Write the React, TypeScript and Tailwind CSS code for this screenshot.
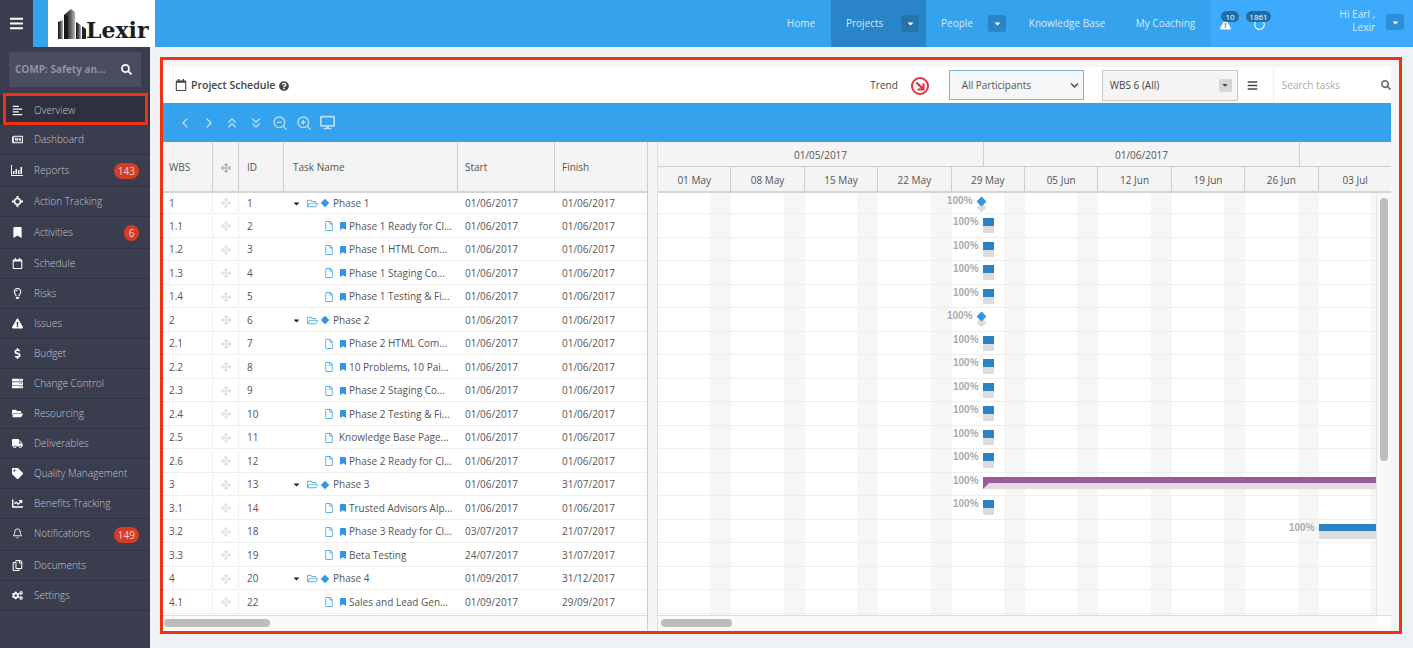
import React from "react";
import {
  FaAlignLeft,
  FaArrowsAlt,
  FaBars,
  FaBookmark,
  FaCaretDown,
  FaChartLine,
  FaChevronDown,
  FaCogs,
  FaDesktop,
  FaDollarSign,
  FaExclamationTriangle,
  FaFolderOpen,
  FaQuestionCircle,
  FaRegCalendar,
  FaRegCircle,
  FaRegCopy,
  FaRegFile,
  FaRegFolderOpen,
  FaRegLightbulb,
  FaRegNewspaper,
  FaSearch,
  FaServer,
  FaTag,
  FaTruck,
} from "react-icons/fa";
import { FiBell, FiChevronLeft, FiChevronRight, FiChevronsDown, FiChevronsUp, FiZoomIn, FiZoomOut } from "react-icons/fi";

function ChartIcon({ className }: { className?: string }) {
  return (
    <svg viewBox="0 0 12 11" width="12" height="11" className={className} fill="currentColor">
      <path d="M0 0h1v10h11v1H0z" />
      <path d="M2 6h1.5v3H2zM4.5 4H6v5H4.5zM7 5h1.5v4H7zM9.500 2H11v7H9.500z" />
    </svg>
  );
}

function TargetIcon({ className }: { className?: string }) {
  return (
    <svg viewBox="0 0 12 12" width="11" height="11" className={className} fill="none" stroke="currentColor">
      <circle cx="6" cy="6" r="3.2" strokeWidth="1.6" />
      <path d="M6 0v2.500M6 9.500V12M0 6h2.500M9.500 6H12" strokeWidth="2" />
    </svg>
  );
}

const menu = [
  { label: "Overview", icon: FaAlignLeft, h: "h-[30px] pt-[1px]", active: true },
  { label: "Dashboard", icon: FaRegNewspaper, h: "h-[30px]" },
  { label: "Reports", icon: ChartIcon, h: "h-[32px]", badge: "143" },
  { label: "Action Tracking", icon: TargetIcon, h: "h-[30px]" },
  { label: "Activities", icon: FaBookmark, h: "h-[32px] pb-[1px]", badge: "6" },
  { label: "Schedule", icon: FaRegCalendar, h: "h-[30px]" },
  { label: "Risks", icon: FaRegLightbulb, h: "h-[30px]" },
  { label: "Issues", icon: FaExclamationTriangle, h: "h-[30px]" },
  { label: "Budget", icon: FaDollarSign, h: "h-[30px]" },
  { label: "Change Control", icon: FaServer, h: "h-[30px]" },
  { label: "Resourcing", icon: FaFolderOpen, h: "h-[30px]" },
  { label: "Deliverables", icon: FaTruck, h: "h-[30px]" },
  { label: "Quality Management", icon: FaTag, h: "h-[30px]" },
  { label: "Benefits Tracking", icon: FaChartLine, h: "h-[30px] pb-[1px]" },
  { label: "Notifications", icon: FiBell, h: "h-[32px] pb-[3px]", badge: "149" },
  { label: "Documents", icon: FaRegCopy, h: "h-[30px] pb-[1px]" },
  { label: "Settings", icon: FaCogs, h: "h-[30px] pb-[1px]" },
];

type Row = {
  wbs: string;
  id: string;
  name: string;
  start: string;
  finish: string;
  kind: "phase" | "task" | "plain";
  bar?: "diamond" | "small" | "purple" | "long";
};

const rows: Row[] = [
  { wbs: "1", id: "1", name: "Phase 1", start: "01/06/2017", finish: "01/06/2017", kind: "phase", bar: "diamond" },
  { wbs: "1.1", id: "2", name: "Phase 1 Ready for Cl...", start: "01/06/2017", finish: "01/06/2017", kind: "task", bar: "small" },
  { wbs: "1.2", id: "3", name: "Phase 1 HTML Com...", start: "01/06/2017", finish: "01/06/2017", kind: "task", bar: "small" },
  { wbs: "1.3", id: "4", name: "Phase 1 Staging Co...", start: "01/06/2017", finish: "01/06/2017", kind: "task", bar: "small" },
  { wbs: "1.4", id: "5", name: "Phase 1 Testing & Fi...", start: "01/06/2017", finish: "01/06/2017", kind: "task", bar: "small" },
  { wbs: "2", id: "6", name: "Phase 2", start: "01/06/2017", finish: "01/06/2017", kind: "phase", bar: "diamond" },
  { wbs: "2.1", id: "7", name: "Phase 2 HTML Com...", start: "01/06/2017", finish: "01/06/2017", kind: "task", bar: "small" },
  { wbs: "2.2", id: "8", name: "10 Problems, 10 Pai...", start: "01/06/2017", finish: "01/06/2017", kind: "task", bar: "small" },
  { wbs: "2.3", id: "9", name: "Phase 2 Staging Co...", start: "01/06/2017", finish: "01/06/2017", kind: "task", bar: "small" },
  { wbs: "2.4", id: "10", name: "Phase 2 Testing & Fi...", start: "01/06/2017", finish: "01/06/2017", kind: "task", bar: "small" },
  { wbs: "2.5", id: "11", name: "Knowledge Base Page...", start: "01/06/2017", finish: "01/06/2017", kind: "plain", bar: "small" },
  { wbs: "2.6", id: "12", name: "Phase 2 Ready for Cl...", start: "01/06/2017", finish: "01/06/2017", kind: "task", bar: "small" },
  { wbs: "3", id: "13", name: "Phase 3", start: "01/06/2017", finish: "31/07/2017", kind: "phase", bar: "purple" },
  { wbs: "3.1", id: "14", name: "Trusted Advisors Alp...", start: "01/06/2017", finish: "01/06/2017", kind: "task", bar: "small" },
  { wbs: "3.2", id: "18", name: "Phase 3 Ready for Cl...", start: "03/07/2017", finish: "21/07/2017", kind: "task", bar: "long" },
  { wbs: "3.3", id: "19", name: "Beta Testing", start: "24/07/2017", finish: "31/07/2017", kind: "task" },
  { wbs: "4", id: "20", name: "Phase 4", start: "01/09/2017", finish: "31/12/2017", kind: "phase" },
  { wbs: "4.1", id: "22", name: "Sales and Lead Gen...", start: "01/09/2017", finish: "29/09/2017", kind: "task" },
];

const weeks = ["01 May", "08 May", "15 May", "22 May", "29 May", "05 Jun", "12 Jun", "19 Jun", "26 Jun", "03 Jul"];

function Caret() {
  return (
    <span className="flex h-[17px] w-[18px] items-center justify-center rounded-[3px] bg-[#2475ae] text-white">
      <FaCaretDown className="text-[9px]" />
    </span>
  );
}

function Sidebar() {
  return (
    <aside className="w-[150px] shrink-0 bg-[#3a3d4e] text-[10px] text-[#c3c5cc]">
      <div className="px-[9px] pt-[5px] pb-[8px]">
        <div className="flex h-[35px] items-center justify-between bg-[#4a4c5f] pr-[9px] pl-[6px]">
          <span className="font-bold text-[#90929f]">COMP: Safety an...</span>
          <FaSearch className="text-[11px] text-white" />
        </div>
      </div>
      {menu.map((m) => {
        const Icon = m.icon;
        return (
          <div
            key={m.label}
            className={`relative flex items-center border-b border-[#2e313f] ${m.h} ${m.active ? "bg-[#2e3040]" : ""}`}
          >
            <span className="flex w-[34px] shrink-0 justify-center text-white">
              <Icon className="text-[11px]" />
            </span>
            <span className="font-light">{m.label}</span>
            {m.badge && (
              <span className="absolute top-[8px] right-[11px] flex h-[16px] min-w-[15px] items-center justify-center rounded-full bg-[#d63b27] px-[4px] text-[#f5d5cf]">
                {m.badge}
              </span>
            )}
            {m.active && <span className="absolute -top-[2px] right-[2px] -bottom-[1px] left-[3px] border-[3px] border-[#ee3311]" />}
          </div>
        );
      })}
    </aside>
  );
}

function TopBar() {
  return (
    <header className="flex h-[47px] shrink-0 bg-[#35a2ee] text-[10px] text-[#d5ecfb]">
      <div className="flex w-[33px] items-center justify-center bg-[#3a3d4e] text-white">
        <FaBars className="text-[15px]" />
      </div>
      <div className="w-[15px]" />
      <div className="flex w-[107px] items-end bg-white pb-[8px] pl-[10px]">
        <svg width="28" height="30" viewBox="0 0 28 30" className="shrink-0">
          <defs>
            <linearGradient id="tower" x1="0" y1="0" x2="1" y2="0">
              <stop offset="0" stopColor="#111" />
              <stop offset="0.55" stopColor="#555" />
              <stop offset="1" stopColor="#bbb" />
            </linearGradient>
          </defs>
          <path d="M0 30V13l5-2v19z" fill="url(#tower)" />
          <path d="M6 30V6l7-6 4 3v27z" fill="url(#tower)" />
          <path d="M7 30V7h3v23z" fill="#1a1a1a" />
          <path d="M18 30V13l5 3v14z" fill="url(#tower)" />
          <path d="M24 30V17l4 3v10z" fill="#222" />
        </svg>
        <span className="font-['DejaVu_Serif',serif] text-[22px] leading-[18px] font-bold text-[#1c1c1c]">Lexir</span>
      </div>
      <div className="flex-1" />
      <nav className="flex items-center">
        <div className="flex h-full w-[60px] items-center justify-center">Home</div>
        <div className="flex h-full w-[95px] items-center justify-between bg-[#2a85c8] pr-[7px] pl-[15px]">
          Projects
          <Caret />
        </div>
        <div className="flex h-full w-[88px] items-center justify-between pr-[8px] pl-[15px]">
          People
          <span className="flex h-[17px] w-[18px] items-center justify-center rounded-[3px] bg-[#2a85c8] text-white">
            <FaCaretDown className="text-[9px]" />
          </span>
        </div>
        <div className="flex h-full w-[106px] items-center justify-center">Knowledge Base</div>
        <div className="flex h-full w-[91px] items-center justify-center">My Coaching</div>
      </nav>
      <div className="relative flex w-[202px] items-center bg-[#3eaafc]">
        <div className="flex items-center gap-[23px] pt-[2px] pl-[9px]">
          <FaExclamationTriangle className="text-[11px] text-white" />
          <FaRegCircle className="text-[11px] text-white" />
        </div>
        <span className="absolute top-[11px] left-[10px] flex h-[11px] w-[18px] items-center justify-center rounded-full bg-[#1f6ea6] text-[8px] text-white">10</span>
        <span className="absolute top-[11px] left-[35px] flex h-[11px] w-[25px] items-center justify-center rounded-full bg-[#1f6ea6] text-[8px] text-white">1861</span>
        <div className="absolute top-[8px] right-[38px] text-right leading-[13px]">
          Hi Earl ,
          <br />
          Lexir
        </div>
        <span className="absolute top-[14px] right-[9px] flex h-[16px] w-[18px] items-center justify-center rounded-[3px] bg-[#2e8fd8] text-white">
          <FaCaretDown className="text-[9px]" />
        </span>
      </div>
    </header>
  );
}

function Filters() {
  return (
    <div className="flex h-[36px] shrink-0 items-center bg-white text-[10px] text-[#444]">
      <FaRegCalendar className="ml-[12px] text-[12px] text-[#444]" />
      <span className="mt-[2px] ml-[4px] text-[10.5px] font-semibold">Project Schedule</span>
      <FaQuestionCircle className="mt-[1px] ml-[4px] text-[10px] text-[#444]" />
      <span className="ml-[581px]">Trend</span>
      <span className="mt-[2px] ml-[13px] flex h-[18px] w-[18px] items-center justify-center rounded-full border-2 border-[#d9363e] text-[#d9363e]">
        <svg viewBox="0 0 10 10" width="10" height="10" fill="none" stroke="currentColor" strokeWidth="2.200">
          <path d="M1.500 1.500l6 6M8.500 2.500v6h-6" />
        </svg>
      </span>
      <div className="ml-[20px] flex h-[30px] w-[135px] items-center justify-between border border-[#7db4e0] bg-[#f4f6f8] pr-[4px] pl-[12px] text-[#555]">
        All Participants
        <FaChevronDown className="text-[9px] text-[#444]" />
      </div>
      <div className="ml-[18px] flex h-[31px] w-[136px] items-center justify-between border-[1.5px] border-[#c8c8c8] bg-[#f5f5f5] pr-[5px] pl-[7px]">
        WBS 6 (All)
        <span className="flex h-[13px] w-[13px] items-center justify-center rounded-[2px] bg-[#d5d5d5]">
          <FaCaretDown className="text-[8px]" />
        </span>
      </div>
      <FaBars className="ml-[9px] text-[11px] text-[#444]" />
      <div className="ml-[15px] flex h-full flex-1 items-center justify-between border-l border-[#eee] pl-[8px] text-[#aaa]">
        Search tasks
        <FaSearch className="text-[10px] text-[#666]" />
      </div>
    </div>
  );
}

function Toolbar() {
  const slot = "flex w-[16px] justify-center text-[#b5e0fa]";
  return (
    <div className="flex h-[39px] shrink-0 items-center gap-[7.500px] bg-[#35a2ee] pl-[14px] text-[18px]">
      <span className={slot}>
        <FiChevronLeft />
      </span>
      <span className={slot}>
        <FiChevronRight />
      </span>
      <span className={slot}>
        <FiChevronsUp />
      </span>
      <span className={slot}>
        <FiChevronsDown />
      </span>
      <span className={`${slot} ml-[1px] text-[16px]`}>
        <FiZoomOut />
      </span>
      <span className={`${slot} text-[16px]`}>
        <FiZoomIn />
      </span>
      <span className={`${slot} text-[15px]`}>
        <FaDesktop />
      </span>
    </div>
  );
}

function TaskName({ row }: { row: Row }) {
  if (row.kind === "phase") {
    return (
      <div className="flex items-center pl-[8px]">
        <FaCaretDown className="text-[9px] text-[#222]" />
        <FaRegFolderOpen className="ml-[6px] text-[11px] text-[#5ab4e8]" />
        <span className="mr-[3px] ml-[4px] size-[6px] rotate-45 bg-[#2f96e6]" />
        <span className="ml-[2px]">{row.name}</span>
      </div>
    );
  }
  return (
    <div className="flex items-center pl-[40px]">
      <FaRegFile className="text-[10px] text-[#5ab4e8]" />
      {row.kind === "task" && <FaBookmark className="ml-[5px] text-[8px] text-[#2f96e6]" />}
      <span className={row.kind === "task" ? "ml-[2px]" : "ml-[5px]"}>{row.name}</span>
    </div>
  );
}

function TaskTable() {
  return (
    <div className="flex h-full w-[485px] shrink-0 flex-col border-r border-[#ccc]">
      <div className="grid h-[51px] shrink-0 grid-cols-[50px_26px_45px_174px_97px_93px] border-b-2 border-[#d5d5d5] bg-[#f4f4f4] text-[#555]">
        <div className="flex items-center border-r border-[#ccc] pt-[2px] pl-[6px]">WBS</div>
        <div className="flex items-center justify-center border-r border-[#ccc] pt-[2px] text-[#aaa]">
          <FaArrowsAlt className="text-[10px]" />
        </div>
        <div className="flex items-center border-r border-[#ccc] pt-[2px] pl-[8px]">ID</div>
        <div className="flex items-center border-r border-[#ccc] pt-[2px] pl-[9px]">Task Name</div>
        <div className="flex items-center border-r border-[#ccc] pt-[2px] pl-[7px]">Start</div>
        <div className="flex items-center pt-[2px] pl-[7px]">Finish</div>
      </div>
      <div className="flex-1 overflow-hidden">
        {rows.map((r, i) => (
          <div
            key={r.id}
            className={`grid grid-cols-[50px_26px_45px_174px_97px_93px] items-center border-b border-[#eee] text-[#555] ${i === 0 ? "h-[21px]" : "h-[23.5px] pt-[1.5px]"}`}
          >
            <div className="flex h-full items-center border-r border-[#eee] pl-[6px]">{r.wbs}</div>
            <div className="flex h-full items-center justify-center border-r border-[#eee] text-[#ddd]">
              <FaArrowsAlt className="text-[10px]" />
            </div>
            <div className="pl-[8px]">{r.id}</div>
            <TaskName row={r} />
            <div className="pl-[7px]">{r.start}</div>
            <div className="pl-[7px]">{r.finish}</div>
          </div>
        ))}
      </div>
      <div className="h-[16px] shrink-0 border-t border-[#ddd] bg-[#fafafa] pt-[3px] pl-[1px]">
        <div className="h-[8px] w-[106px] rounded-full bg-[#bdbdbd]" />
      </div>
    </div>
  );
}

function GanttBar({ bar }: { bar: NonNullable<Row["bar"]> }) {
  const pct = "absolute top-[1px] text-right text-[10px] leading-[14px] font-bold text-[#aaa] font-['Liberation_Sans',sans-serif]";
  if (bar === "diamond") {
    return (
      <>
        <span className={`${pct} left-[289px]`}>100%</span>
        <span className="absolute top-[11px] left-[319.500px] size-[7px] rotate-45 bg-[#ddd]" />
        <span className="absolute top-[5px] left-[319.500px] size-[7px] rotate-45 bg-[#2f96e6]" />
      </>
    );
  }
  if (bar === "small") {
    return (
      <>
        <span className={`${pct} left-[295px]`}>100%</span>
        <span className="absolute top-[4px] left-[325px] h-[8px] w-[11px] bg-[#2b83c6]" />
        <span className="absolute top-[12px] left-[325px] h-[7px] w-[11px] bg-[#dcdcdc]" />
      </>
    );
  }
  if (bar === "purple") {
    return (
      <>
        <span className={`${pct} left-[295px]`}>100%</span>
        <span className="absolute top-[4px] right-0 left-[325px] h-[6px] bg-[#985a98]" />
        <span className="absolute top-[10px] right-0 left-[325px] h-[6px] bg-[#e0dce0]" />
        <span className="absolute top-[10px] left-[325px] size-0 border-t-[6px] border-r-[6px] border-t-[#985a98] border-r-transparent" />
      </>
    );
  }
  return (
    <>
      <span className={`${pct} left-[631px]`}>100%</span>
      <span className="absolute top-[4px] right-0 left-[661px] h-[7px] bg-[#2b83c6]" />
      <span className="absolute top-[11px] right-0 left-[661px] h-[8px] bg-[#dcdcdc]" />
    </>
  );
}

function Gantt() {
  return (
    <div className="flex h-full min-w-0 flex-1 flex-col">
      <div className="h-[51px] shrink-0 border-b-2 border-[#d5d5d5] bg-[#f4f4f4] text-[#555]">
        <div className="flex h-[25px] border-b border-[#ccc]">
          <div className="flex w-[326px] items-center justify-center border-r border-[#ccc] pt-[2px]">01/05/2017</div>
          <div className="flex w-[316px] items-center justify-center border-r border-[#ccc] pt-[2px]">01/06/2017</div>
        </div>
        <div className="flex h-[24px]">
          {weeks.map((w) => (
            <div key={w} className="flex w-[73.4px] shrink-0 items-center justify-center border-r border-[#ccc] pt-[2px] last:border-r-0">
              {w}
            </div>
          ))}
        </div>
      </div>
      <div className="flex min-h-0 flex-1">
        <div className="relative min-w-0 flex-1 overflow-hidden border-r border-[#e5e5e5]">
          <div className="absolute inset-0 flex">
            {weeks.map((w) => (
              <div key={w} className="flex w-[73.4px] shrink-0 justify-end">
                <div className="h-full w-[21px] bg-[#f6f6f6]" />
              </div>
            ))}
          </div>
          {rows.map((r, i) => (
            <div key={r.id} className={`relative border-b border-[#eee] ${i === 0 ? "h-[21px]" : "h-[23.5px]"}`}>
              {r.bar && <GanttBar bar={r.bar} />}
            </div>
          ))}
        </div>
        <div className="w-[14px] shrink-0 bg-[#f8f8f8] pt-[5px] pl-[3px]">
          <div className="h-[263px] w-[8px] rounded-full bg-[#bdbdbd]" />
        </div>
      </div>
      <div className="flex h-[16px] shrink-0 border-t border-[#ddd] bg-[#fafafa]">
        <div className="flex-1 pt-[3px] pl-[3px]">
          <div className="h-[8px] w-[71px] rounded-full bg-[#bdbdbd]" />
        </div>
        <div className="w-[14px] bg-white" />
      </div>
    </div>
  );
}

export default function App() {
  return (
    <div className="flex h-[648px] w-[1413px] flex-col overflow-hidden bg-[#eff3f6] font-['Open_Sans',sans-serif]">
      <TopBar />
      <div className="flex min-h-0 flex-1">
        <Sidebar />
        <main className="min-w-0 flex-1 pt-[10px] pl-[10px]">
          <div className="flex h-[577px] w-[1242px] flex-col border-[3px] border-[#ee3311] bg-[#f3f5f8] pt-[7px] pr-[8px] text-[10px]">
            <Filters />
            <Toolbar />
            <div className="flex min-h-0 flex-1 bg-white">
              <TaskTable />
              <div className="w-[10px] shrink-0 border-r border-[#ddd] bg-[#f3f5f8]" />
              <Gantt />
            </div>
          </div>
        </main>
      </div>
    </div>
  );
}
